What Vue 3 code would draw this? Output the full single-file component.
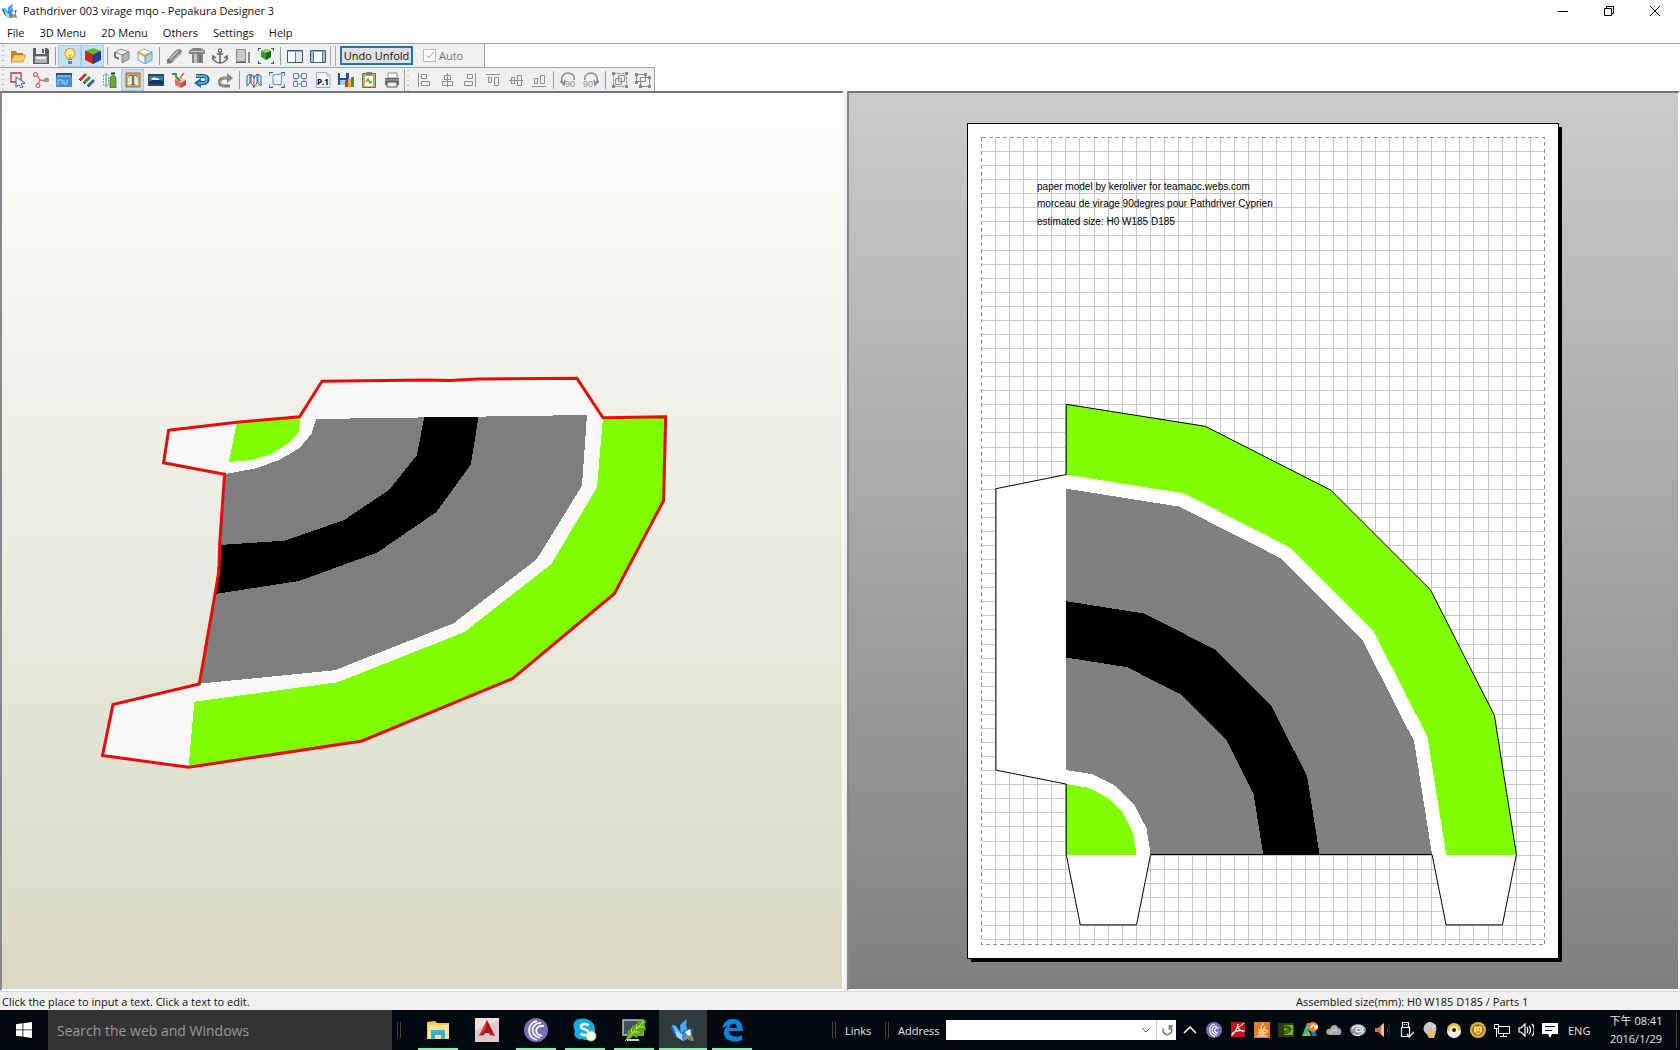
<template>
<div class="desktop">
  <header class="titlebar">
    <svg class="app-icon" viewBox="0 0 24 24" v-html="icons.app"></svg>
    <h1>Pathdriver 003 virage mqo - Pepakura Designer 3</h1>
    <div class="window-buttons">
      <button aria-label="Minimize"><svg viewBox="0 0 12 12"><path d="M1 6.500h10"/></svg></button>
      <button aria-label="Restore"><svg viewBox="0 0 12 12"><path d="M1.500 3.500h7v7h-7zM3.500 3.500v-2h7v7h-2"/></svg></button>
      <button aria-label="Close"><svg viewBox="0 0 12 12"><path d="M1 1l10 10M11 1L1 11"/></svg></button>
    </div>
  </header>

  <nav class="menubar">
    <button v-for="item in menus" :key="item">{{ item }}</button>
  </nav>

  <section class="toolbars">
    <div class="toolbar first">
      <template v-for="(group, g) in mainTools" :key="g">
        <i v-if="g" class="separator"></i>
        <button v-for="name in group" :key="name" class="tool" :class="{ active: activeTools.includes(name) }" :aria-label="name">
          <svg viewBox="0 0 16 16" v-html="icons[name]"></svg>
        </button>
      </template>
      <i class="band-grip"></i>
      <button class="unfold" @click="unfolded = !unfolded">Undo Unfold</button>
      <label class="auto"><input type="checkbox" checked disabled><span>Auto</span></label>
    </div>
    <div class="toolbar second">
      <template v-for="(group, g) in editTools" :key="g">
        <i v-if="g" class="separator"></i>
        <button v-for="name in group" :key="name" class="tool" :class="{ active: activeTools.includes(name) }" :aria-label="name">
          <svg viewBox="0 0 16 16" v-html="icons[name]"></svg>
        </button>
      </template>
      <i class="dot-grip"></i>
      <template v-for="(group, g) in alignTools" :key="g">
        <i v-if="g" class="separator"></i>
        <button v-for="name in group" :key="name" class="tool disabled" disabled :aria-label="name">
          <svg viewBox="0 0 16 16" v-html="icons[name]"></svg>
        </button>
      </template>
    </div>
  </section>

  <main class="views">
    <section class="view view-3d">
      <svg viewBox="2 93 840 896" shape-rendering="crispEdges">
        <polygon :points="model.outline" fill="#f9f9f9"/>
        <polygon :points="model.innerGrass" fill="#80ff00"/>
        <polygon :points="model.outerGrass" fill="#80ff00"/>
        <polygon :points="model.road" fill="#7e7e7e"/>
        <polygon :points="model.stripe" fill="#000"/>
        <polygon :points="model.outline" fill="none" stroke="#e60c0c" stroke-width="3" shape-rendering="auto"/>
      </svg>
    </section>
    <section class="view view-2d">
      <svg viewBox="849 93 829 896" shape-rendering="crispEdges">
        <path d="M971 127h591v835H971z" fill="#000"/>
        <path d="M967.500 123.500h591v834.500h-591z" fill="#fff" stroke="#000"/>
        <path :d="gridPath" stroke="#c6c6c6" fill="none"/>
        <path d="M981.500 137.500h563v807h-563z" fill="none" stroke="#909090" stroke-dasharray="4 3"/>
        <g class="paper-text">
          <text x="1037" y="190">paper model by keroliver for teamaoc.webs.com</text>
          <text x="1037" y="207">morceau de virage 90degres pour Pathdriver Cyprien</text>
          <text x="1037" y="225">estimated size: H0 W185 D185</text>
        </g>
        <polygon :points="sector(32)" fill="#80ff00"/>
        <polygon :points="sector(27)" fill="#fff"/>
        <polygon :points="sector(26)" fill="#808080"/>
        <polygon :points="sector(18)" fill="#000"/>
        <polygon :points="sector(14)" fill="#808080"/>
        <polygon :points="sector(6)" fill="#fff"/>
        <polygon :points="sector(5)" fill="#80ff00"/>
        <polygon v-for="tab in tabs" :key="tab" :points="tab" fill="#fdfdfd"/>
        <polyline :points="cutLine" fill="none" stroke="#000" shape-rendering="auto"/>
      </svg>
    </section>
  </main>

  <footer class="statusbar">
    <span>Click the place to input a text. Click a text to edit.</span>
    <span class="size">Assembled size(mm): H0 W185 D185 / Parts 1</span>
  </footer>

  <div class="taskbar">
    <button class="start" aria-label="Start">
      <svg viewBox="0 0 16 16"><path fill="#fff" d="M0 2.200l6.500-.9v6.200H0zM7.300 1.200L16 0v7.500H7.300zM0 8.300h6.500v6.200L0 13.700zM7.300 8.300H16V16l-8.700-1.300z"/></svg>
    </button>
    <input class="search" type="text" placeholder="Search the web and Windows" aria-label="Search the web and Windows">
    <i class="task-grip"></i>
    <div class="apps">
      <button v-for="app in apps" :key="app.icon" :class="{ running: app.running, current: app.icon === 'app' }" :aria-label="app.label">
        <svg viewBox="0 0 24 24" v-html="icons[app.icon]"></svg>
      </button>
    </div>
    <div class="deskbands">
      <i class="task-grip"></i>
      <span class="links">Links</span>
      <i class="task-grip"></i>
      <label for="address">Address</label>
      <div class="address">
        <input id="address" type="text">
        <button aria-label="Previous locations"><svg viewBox="0 0 10 10"><path d="M1 3l4 4 4-4" stroke="#555" fill="none"/></svg></button>
        <button class="go" aria-label="Refresh"><svg viewBox="0 0 12 12"><path d="M2.500 4.500a4.300 4.300 0 1 0 6-2M8.500 6V2h4" stroke="#777" stroke-width="1.600" fill="none"/></svg></button>
      </div>
    </div>
    <div class="tray">
      <button v-for="name in tray" :key="name" :aria-label="name"><svg viewBox="0 0 16 16" v-html="icons[name]"></svg></button>
    </div>
    <span class="lang">ENG</span>
    <div class="clock"><span>下午 08:41</span><span>2016/1/29</span></div>
  </div>
</div>
</template>

<script setup>
import { ref, computed } from 'vue'

const unfolded = ref(true)

const menus = ['File', '3D Menu', '2D Menu', 'Others', 'Settings', 'Help']

const mainTools = [
  ['open', 'save'],
  ['light', 'texture'],
  ['box', 'boxEdge'],
  ['roller', 'bucket', 'anchor', 'mirror', 'fit'],
  ['paneLeft', 'paneRight']
]
const editTools = [
  ['select', 'join', 'ruler', 'pencils', 'flap', 'text', 'image', 'unbox', 'undo', 'redo'],
  ['fold', 'bounds', 'arrange', 'page', 'export', 'clipboard', 'print']
]
const alignTools = [
  ['alignLeft', 'alignCenter', 'alignRight', 'alignTop', 'alignMiddle', 'alignBottom'],
  ['rotateLeft', 'rotateRight'],
  ['group', 'ungroup']
]
const activeTools = ['light', 'texture', 'text']

const apps = [
  { icon: 'explorer', label: 'File Explorer', running: true },
  { icon: 'autocad', label: 'AutoCAD', running: false },
  { icon: 'bittorrent', label: 'BitTorrent', running: true },
  { icon: 'skype', label: 'Skype', running: true },
  { icon: 'fern', label: 'Monitor', running: true },
  { icon: 'app', label: 'Pepakura Designer', running: true },
  { icon: 'edge', label: 'Edge', running: true }
]
const tray = ['chevron', 'torrentSmall', 'acrobat', 'java', 'nvidia', 'autodesk', 'cloud', 'swirl', 'speaker', 'usb', 'hand', 'disc', 'shield', 'network', 'volume', 'message']

// textured model in the 3D view
const model = {
  outline: '168.600,430.300 237,422.300 299.600,416.700 322,381.300 425.700,380 449.600,380.500 479,379 577,378.300 603,417.700 665.700,416.700 663.600,500.700 614.300,593.700 512.500,678.700 362,741 188.600,767.300 102.500,755.500 113,704.500 199.300,684 215,594.300 219,570.700 219.600,545.300 224.600,474.300 163.600,462.700',
  innerGrass: '237,422 300,417 299,431.700 287.500,444.300 271.400,454 252.500,460 229,462',
  outerGrass: '603,418 665.700,416.700 663.600,500.700 614.300,593.700 512.500,678.700 362,741 188.600,767.300 194.300,701.700 337.500,682.300 464,632.300 551.400,564 597,487.300',
  road: '316,419 587,415 582,485.700 537,559 453.600,623.300 334.600,670.300 199.300,683.700 215,594 219.600,545 225.700,474 256,468.300 279.300,460 299.600,448 311.400,434',
  stripe: '424.300,417 478.600,417 470.700,464.700 436.400,512 377,552.700 299,581 215,594 219,571 220,545 284.600,540.700 344.300,520 389,490 417,455'
}

// unfolded sheet: one unit is one grid square
const unit = 14.07
const origin = { x: 1066.2, y: 854.5 }

function at(x, y) {
  return `${(origin.x + x * unit).toFixed(1)},${(origin.y - y * unit).toFixed(1)}`
}

function arc(r) {
  return [0, 18, 36, 54, 72, 90].map(deg => {
    const a = deg * Math.PI / 180
    return at(r * Math.sin(a), r * Math.cos(a))
  })
}

function sector(r) {
  return [at(0, 0), ...arc(r)].join(' ')
}

const tabs = [
  [at(0, 27), at(-5, 26), at(-5, 6), at(0, 5)].join(' '),
  [at(0, 0), at(1, -5), at(5, -5), at(6, 0)].join(' '),
  [at(26, 0), at(27, -5), at(31, -5), at(32, 0)].join(' ')
]

const cutLine = [
  at(0, 0), at(0, 5), at(-5, 6), at(-5, 26), at(0, 27),
  ...arc(32),
  at(31, -5), at(27, -5), at(26, 0), at(6, 0), at(5, -5), at(1, -5), at(0, 0)
].join(' ')

const gridPath = computed(() => {
  let d = ''
  for (let i = 1; i < 40; i++) d += `M${Math.round(981 + i * unit) + 0.5} 138V944`
  for (let i = 1; i <= 57; i++) d += `M982 ${Math.round(137 + i * unit) + 0.5}H1544`
  return d
})

const icons = {
  app: '<path d="M1 7l4 1 4 5V7l7-6-1 6 2 5 5-2-2 10-8 3-7-4-5-8z" fill="#1a6fc4"/><path d="M9 7l7-6-1 6 1 4-6 4z" fill="#4aaaf0"/><path d="M1 7l4 1 5 8-6-3z" fill="#6cc1f7"/><path d="M4 13l7 3 1 7-6-4z" fill="#a9d8f8"/><path d="M11 16l8-5 2 7-9 5z" fill="#3c8fd4"/><path d="M14 14l5-3 1 6-3 1z" fill="#eaf5fc"/><path d="M14 22l2-4 2 4M20 22v-5l2 5z" fill="none" stroke="#b78a35" stroke-width="1.500"/>',
  open: '<path d="M1 3h5l1 2h6v3H4l-3 6z" fill="#b8862c"/><path d="M4 7h12l-3 7H1z" fill="#f6cd62" stroke="#bd8b2c" stroke-width=".7"/>',
  save: '<path d="M0 0h14l2 2v14H0z" fill="#52606e"/><path d="M3 0h9v6H3z" fill="#e9edf0"/><path d="M9 1h2v4H9z" fill="#52606e"/><path d="M2 8h12v7H2z" fill="#aab4bd"/><path d="M3 9h10v2H3z" fill="#eee"/>',
  light: '<circle cx="8" cy="5.500" r="5" fill="#fff4a4" stroke="#e9a51a" stroke-width="1.200"/><path d="M6 6l2 2 2-2M8 8v3" stroke="#e9a51a" fill="none"/><path d="M6 11h4v5H6z" fill="#6f7f9c"/><path d="M6 12.500h4" stroke="#d5dce6"/>',
  texture: '<path d="M8 0l8 3-8 4-8-4z" fill="#67b92f"/><path d="M0 3l8 4v9l-8-4z" fill="#d12622"/><path d="M16 3L8 7v9l8-4z" fill="#21409f"/><path d="M0 3l8 4 8-4M8 7v9" stroke="#333" stroke-width=".7" fill="none"/>',
  box: '<path d="M1 4l6-3 8 3-7 3z" fill="#eee" stroke="#888"/><path d="M8 7l7-3v7l-7 4z" fill="#b4b4b4" stroke="#888"/><path d="M1 4v5l4 2" fill="none" stroke="#777" stroke-width="2"/>',
  boxEdge: '<path d="M1 4l6-3 8 3-7 4z" fill="#fff" stroke="#7eb6dc"/><path d="M8 8l7-4v8l-7 4z" fill="#a9d3ef" stroke="#6ba3ca"/><path d="M1 4l7 4v8l-7-4z" fill="#e4f2fb" stroke="#6ba3ca"/><path d="M1 4l7 4 4-2" fill="none" stroke="#ed992e" stroke-width="2"/>',
  roller: '<path d="M1 12l9-10 4-1 2 2-1 3-9 9-5 1z" fill="#858585"/><path d="M4 11l8-8M7 13l7-7" stroke="#c8c8c8" stroke-width="1.300"/><path d="M1 12l4 3" stroke="#555"/>',
  bucket: '<path d="M0 3l4-3h8l4 3v3h-2v9H3V6H0z" fill="#858585"/><path d="M5 6h3v9H5z" fill="#c4c4c4"/><path d="M2 3.500h12" stroke="#d0d0d0"/><path d="M11 6v9" stroke="#666"/>',
  anchor: '<circle cx="8" cy="2.500" r="1.700" fill="none" stroke="#666" stroke-width="1.200"/><path d="M8 4v11M5 6h6M1 9c0 4 4 6 7 6s7-2 7-6M0 11l1-3 3 2M16 11l-1-3-3 2" fill="none" stroke="#666" stroke-width="1.500"/>',
  mirror: '<path d="M1.500 1.500h9v12h-9z" fill="#c8c8c8" stroke="#888"/><path d="M1 14.500h10" stroke="#555"/><path d="M13 4h2v11h-2z" fill="#888"/>',
  fit: '<path d="M8 1l5 2v6l-5 3-5-3V3z" fill="#3a9a2e"/><path d="M8 1l5 2-5 2-5-2z" fill="#8ddb50"/><path d="M8 5l5-2v6l-5 3z" fill="#1d6b22"/><path d="M0 3V0h3M13 0h3v3M0 13v3h3M16 13v3h-3" stroke="#2456a6" stroke-width="2" fill="none"/>',
  paneLeft: '<path d="M.500 2.500h15v12H.500z" fill="#fff" stroke="#315b86"/><path d="M1 3h14v1H1z" fill="#8ab0d3"/><path d="M8.500 4v10" stroke="#567a9e"/><path d="M9 4h6v10H9z" fill="#dfe9f2"/>',
  paneRight: '<path d="M.500 2.500h15v12H.500z" fill="#fff" stroke="#315b86"/><path d="M1 3h14v1H1z" fill="#8ab0d3"/><path d="M12.500 4v10M3.500 4v10" stroke="#567a9e"/><path d="M13 4h2v10h-2zM1 4h2v10H1z" fill="#a9c0d6"/>',
  select: '<path d="M11 10V1H1v9h5" fill="none" stroke="#bd3434" stroke-width="1.300"/><path d="M6 5l9 6-4 1 2 3-2 1-2-3-3 2z" fill="#eaf5ff" stroke="#385f8a"/>',
  join: '<path d="M3 2l4 6 7 1M7 8l-3 6" stroke="#e06060" fill="none" stroke-width="1.300"/><circle cx="2.500" cy="2.500" r="2" fill="#fff" stroke="#c33"/><circle cx="5" cy="13.500" r="2" fill="#fff" stroke="#c33"/><circle cx="13.500" cy="8" r="2.500" fill="#999"/>',
  ruler: '<path d="M0 1h16v14H0z" fill="#3f92d8"/><path d="M0 1h16v4H0z" fill="#1d568f"/><path d="M2 3v2M4 3v2M6 3v2M8 3v2M10 3v2M12 3v2M14 3v2" stroke="#fff"/><path d="M2 13V8h4v4M8 8v4h3V8" stroke="#b5dcf8" fill="none"/>',
  pencils: '<path d="M1 8l6-6" stroke="#c8362b" stroke-width="3"/><path d="M5 11l6-6" stroke="#3a9238" stroke-width="3"/><path d="M9 14l6-6" stroke="#2f64b4" stroke-width="3"/><path d="M0 7l2 2M4 10l2 2M8 13l2 2" stroke="#222"/>',
  flap: '<path d="M1.500 3v10h5V3z" fill="#fff" stroke="#6a9dc8" stroke-dasharray="2 1"/><path d="M4 1v14" stroke="#447baf"/><path d="M8 5l3-2 3 2v11H8z" fill="#67a83c" stroke="#426f2d" stroke-width=".7"/><path d="M9 1.500h4" stroke="#333" stroke-width="2"/>',
  text: '<path d="M1 1h14v14H1z" fill="#dba45c" stroke="#a66a24"/><path d="M3 3h10v10H3z" fill="#f7e8c7"/><text x="8" y="13" font-family="Liberation Serif, serif" font-size="14" font-weight="bold" fill="#55708c" text-anchor="middle">T</text>',
  image: '<path d="M0 2h16v12H0z" fill="#3a4552"/><path d="M1 4h14v8H1z" fill="#2d78c0"/><path d="M1 10l6-3 8 2v3H1z" fill="#1a3555"/><path d="M3 7c2-2 6-2 9 1H5z" fill="#e5f2fb"/>',
  unbox: '<path d="M4 7l5-2 6 3-5 3z" fill="#f4b6aa"/><path d="M4 7l6 4v5l-6-3z" fill="#e2705e"/><path d="M15 8l-5 3v5l5-3z" fill="#c34b3f"/><path d="M1 2l4 0v3l4 4" fill="none" stroke="#398b40" stroke-width="1.800"/><path d="M9 6l4-5" stroke="#6a9d38" stroke-width="1.500"/>',
  undo: '<path d="M2 4h7c6 0 6 7 0 7H6" fill="none" stroke="#164e8c" stroke-width="4"/><path d="M0 11l7-5v10z" fill="#1f62a8"/><path d="M2 4h7c5 0 5 7 0 7H4" fill="none" stroke="#5aaaea" stroke-width="2"/>',
  redo: '<path d="M12 6H7c-6 1-6 8 1 8h5" fill="none" stroke="#777" stroke-width="3"/><path d="M12 6H7c-5 1-5 7 0 8" fill="none" stroke="#bbb"/><path d="M16 6l-6-5v10z" fill="#888"/>',
  fold: '<path d="M1 4l3-2v9l-3 3zM15 4l-3-2v9l3 3z" fill="#dbefff" stroke="#2c638e"/><path d="M5 2l3 4 3-4v9l-3 4-3-4z" fill="#f3f9ff" stroke="#2c638e"/><path d="M8 3v13" stroke="#d52b2b"/>',
  bounds: '<path d="M4 3l9-1-1 11-8-1z" fill="#edf7ff" stroke="#5e8cba"/><path d="M0 4V.500h4M12 .500h4V4M16 12v3.500h-4M0 12v3.500h4" fill="none" stroke="#2d66a5" stroke-width="1.500"/>',
  arrange: '<path d="M1.500 1.500h5v5h-5zM9.500 1.500h5v5h-5zM1.500 9.500h4v5h-4zM9.500 9.500h5v5h-5z" fill="#e2effa" stroke="#66829e"/><path d="M6 4h4M4 6v4M12 6v4M6 12h3" stroke="#66829e"/>',
  page: '<path d="M1.500.500H12l3 3v12H1.500z" fill="#eef7ff" stroke="#85b4d8"/><path d="M12 1v3h3" fill="none" stroke="#85b4d8"/><text x="8" y="13" font-family="Open Sans, sans-serif" font-size="8" font-weight="bold" text-anchor="middle">P.1</text>',
  export: '<path d="M0 1h11v12H0z" fill="#264bb2"/><path d="M2 1h6v5H2z" fill="#fff"/><path d="M2 8h6v5H2z" fill="#a9c6f2"/><path d="M7 15v-6h3v6" fill="#d63030"/><path d="M10 15V7h3v8" fill="#f0b422"/><path d="M13 15V5h3v10" fill="#4b963a"/>',
  clipboard: '<path d="M1.500 1.500h13v14h-13z" fill="#bdac65" stroke="#7e733f"/><path d="M4 4h8v10H4z" fill="#fff"/><path d="M5 0h6v3H5z" fill="#718299"/><path d="M5 10l2-3 2 4 2-2" fill="none" stroke="#4aaa43" stroke-width="1.500"/>',
  print: '<path d="M4 1h9v5H4z" fill="#fff" stroke="#888"/><path d="M1 6h14v7H1z" fill="#656565"/><path d="M3 10h10v5H3z" fill="#e8e8e8" stroke="#555"/><path d="M1 8h14" stroke="#bbb"/>',
  alignLeft: '<path d="M2.500 1v14M5.500 2.500h5v4h-5zM5.500 9.500h8v4h-8z"/>',
  alignCenter: '<path d="M8.500 1v14M5.500 3.500h6v4h-6zM3.500 9.500h10v4h-10z"/>',
  alignRight: '<path d="M13.500 1v14M5.500 2.500h5v4h-5zM2.500 9.500h8v4h-8z"/>',
  alignTop: '<path d="M1 2.500h14M3.500 5.500h3v5h-3zM9.500 5.500h4v8h-4z"/>',
  alignMiddle: '<path d="M1 8.500h14M3.500 5.500h3v6h-3zM9.500 3.500h4v10h-4z"/>',
  alignBottom: '<path d="M1 14.500h14M3.500 6.500h3v5h-3zM9.500 3.500h4v8h-4z"/>',
  rotateLeft: '<path d="M4 12C-1 7 3 1 8 1c5 0 7 4 6 7M0 9l4 4 1-5" stroke-width="1.500"/><text x="5" y="15" font-size="9" font-family="Liberation Sans, sans-serif" stroke="none" fill="#888">90</text>',
  rotateRight: '<path d="M12 12c5-5 1-11-4-11S1 5 2 8M16 9l-4 4-1-5" stroke-width="1.500"/><text x="0" y="15" font-size="9" font-family="Liberation Sans, sans-serif" stroke="none" fill="#888">90</text>',
  group: '<path d="M1.500 1.500h13v13h-13z" stroke-dasharray="3 1"/><path d="M3.500 6.500h6v6h-6zM6.500 3.500h6v6h-6z"/><path d="M0 0h3v3H0zM13 0h3v3h-3zM0 13h3v3H0zM13 13h3v3h-3z" fill="#888" stroke="none"/>',
  ungroup: '<path d="M1.500 2.500h9v7h-9zM5.500 5.500h9v9h-9z"/><path d="M0 1h3v3H0zM9 1h3v3H9zM0 9h3v3H0zM13 4h3v3h-3zM4 13h3v3H4zM13 13h3v3h-3z" fill="#888" stroke="none"/>',
  explorer: '<path d="M1 4l8-1 2 2h12v16H1z" fill="#eec85a"/><path d="M2 7h21v14H2z" fill="#ffe394"/><path d="M5 12h14v9h-4v-4H9v4H5z" fill="#39ace0"/>',
  autocad: '<path d="M0 0h24v24H0z" fill="#efe2e2"/><path d="M0 12L24 2v22H0z" fill="#cdb1b1" opacity=".5"/><path d="M12 2l8 16-5-1-1-2h-4l-1 2-5 1z" fill="#b3171d"/><path d="M12 2l-2 10-6 6z" fill="#e13a3a"/>',
  bittorrent: '<circle cx="12" cy="12" r="12" fill="#7870b7"/><path d="M13 3C3 5 2 19 13 22M17 5C7 5 5 17 16 20M20 8c-9-1-11 8-2 10" fill="none" stroke="#fff" stroke-width="1.800"/>',
  skype: '<path d="M6 1c6-2 16 1 16 11 1 8-8 12-13 9C3 22 0 17 2 13-1 7 1 2 6 1z" fill="#11aee9"/><path d="M15.500 7.500C13 5 8 6 8 8.500c0 3 7.500 2.500 7.500 6 0 3-5.500 3.500-8 1" fill="none" stroke="#fff" stroke-width="2.600"/><circle cx="18" cy="18" r="5" fill="#fff" stroke="#a9d83a"/>',
  fern: '<path d="M1 2h20v15H1z" fill="#48515a" stroke="#bbb" stroke-width="1.500"/><path d="M5 21h12v2H5z" fill="#ccc"/><path d="M5 20l1-8 4 1 0-6 4 1 3-6 3 1 4-1-1 5 1 5-3 1 0 4-4-1-2 4-4-2-3 3z" fill="#5fa81c"/><path d="M3 23L22 3M9 10l1 5M14 6l1 5M11 14h6M16 9h6" stroke="#c9ed59" fill="none"/>',
  edge: '<path d="M2 11C4 3 8 1 13 1c8 0 10 6 10 12H9c0 6 8 7 13 4v5C10 27-2 19 7 8c-2 0-4 2-5 3zM9 10h8c0-6-7-5-8 0z" fill="#0b83db"/>',
  chevron: '<path d="M2 11l6-6 6 6" fill="none" stroke="#fff" stroke-width="1.500"/>',
  torrentSmall: '<circle cx="8" cy="8" r="8" fill="#796fac"/><path d="M9 2C2 3 2 13 9 14.500M11 4c-6 0-7 7 0 9M13 6c-5-1-6 4-1 5" fill="none" stroke="#fff" stroke-width="1.200"/>',
  acrobat: '<path d="M1 0h14v15H1z" fill="#c41119"/><path d="M8 2c0 5-5 10-6 11 0-3 8-6 12-4-3 1-7-3-6-7" fill="none" stroke="#fff" stroke-width="1.200"/><path d="M9 5l5-4" stroke="#fff"/>',
  java: '<path d="M0 0h16v16H0z" fill="#e77b22"/><path d="M9 1c1 2-4 3-1 6M11 4c1 1-2 2-1 4M4 8h8c2 0 1 3-1 3M5 10h5v2H5zM3 14h10" stroke="#fff" fill="none"/>',
  nvidia: '<path d="M0 1h16v14H0z" fill="#26391b"/><path d="M6 3h9v10H6z" fill="#76b900"/><path d="M1 8c3-5 9-5 12-1-2 5-9 6-12 1zM4 8c2-3 5-3 7-1-2 3-5 3-7 1z" fill="none" stroke="#294a10" stroke-width="1.300"/>',
  autodesk: '<path d="M5 1h5L4 14H0z" fill="#39b3a2"/><path d="M7 1l4 3 4 10h-5z" fill="#2d70bf"/><path d="M0 14l7-5 2 5z" fill="#8bc53f"/><circle cx="11" cy="5" r="5" fill="#f08126"/><path d="M9 6c0-4 5-3 5 0M12 6h3V3" stroke="#fff" fill="none" stroke-width="1.500"/>',
  cloud: '<path d="M1 12c-2-4 1-6 3-5 2-6 8-4 8-1 4 0 4 5 2 7H3z" fill="#aaa"/><path d="M5 12c0-4 4-5 6-3" stroke="#ddd" fill="none"/>',
  swirl: '<ellipse cx="8" cy="8" rx="8" ry="6" fill="#89969e"/><path d="M2 7c3-5 11-3 11 0s-7 4-7 1 5-2 5 0M3 12c5 3 9 0 11-3" stroke="#eef4f5" fill="none" stroke-width="1.300"/>',
  speaker: '<path d="M1 6h3l6-5v14l-6-5H1z" fill="#d36a4e"/><path d="M7 4l3-3v14l-3-3z" fill="#f1c2aa"/><path d="M12 4c2 2 2 6 0 8M14 2c3 3 3 9 0 12" stroke="#61352d" fill="none"/>',
  usb: '<path d="M4.500 5V.500h6V5M3.500 5.500h8v9h-8zM6.500 2v1M8.500 2v1" fill="none" stroke="#eee" stroke-width="1.200"/><path d="M9 12l2 3 5-5" stroke="#ddd" fill="none" stroke-width="1.500"/>',
  hand: '<circle cx="8" cy="6.500" r="6.500" fill="#c4c8cb"/><path d="M8 0v7l6-4" stroke="#eee" fill="none"/><path d="M3 9l4 2V6c0-2 3-2 3 0v3l4 1-2 6H7z" fill="#f0b67a"/>',
  disc: '<circle cx="8" cy="8" r="7" fill="#e6c63c"/><path d="M1 9a7 7 0 0 0 14 0z" fill="#eee"/><circle cx="8" cy="8" r="4" fill="#f7f3da"/><circle cx="8" cy="8" r="2" fill="#222"/>',
  shield: '<circle cx="8" cy="8" r="8" fill="#e2b546"/><circle cx="8" cy="8" r="6" fill="#ad701b"/><path d="M4 5l2-1 2 1 2-1 2 1v5l-4 3-4-3z" fill="#ffdc69"/><path d="M6 7h1M9 7h1M6 10h4" stroke="#774d16"/>',
  network: '<path d="M4.500 4.500h11v7h-11zM9.500 12v3M6 14.500h7M.500 2.500h4v4h-4zM2.500 7v8" fill="none" stroke="#fff"/>',
  volume: '<path d="M1 6h2l4-4v12l-4-4H1zM9 5c1 2 1 4 0 6M11 4c2 2 2 6 0 8M14 2c3 3 3 9 0 12" fill="none" stroke="#fff" stroke-width="1.200"/>',
  message: '<path d="M0 1h16v11H10l-2 4-2-4H0z" fill="#fff"/><path d="M3 4.500h10M3 8.500h7" stroke="#111"/>'
}
</script>

<style>
body {
  margin: 0;
  overflow: hidden;
}
</style>

<style scoped>
.desktop {
  display: flex;
  flex-direction: column;
  height: 100vh;
  background: #fff;
  color: #111;
  font-family: "Open Sans", "Noto Sans CJK TC", sans-serif;
  font-size: 11px;
}

button,
input {
  font: inherit;
  color: inherit;
  margin: 0;
  padding: 0;
  border: 0;
  background: none;
  box-sizing: border-box;
}

button {
  display: flex;
  align-items: center;
  justify-content: center;
}

svg {
  display: block;
}

/* window chrome */
.titlebar {
  display: flex;
  align-items: center;
  height: 22px;
  padding-left: 2px;
}

.titlebar h1 {
  margin: 0 0 0 5px;
  font-size: 11px;
  font-weight: 400;
  line-height: 22px;
}

.app-icon {
  width: 16px;
  height: 16px;
}

.window-buttons {
  display: flex;
  margin: 0 2px 0 auto;
}

.window-buttons button {
  width: 46px;
  height: 20px;
}

.window-buttons svg {
  width: 12px;
  height: 12px;
  fill: none;
  stroke: #000;
}

.menubar {
  display: flex;
  gap: 15px;
  height: 21px;
  padding-left: 7px;
}

/* toolbars */
.toolbars {
  display: flex;
  flex-direction: column;
  align-items: flex-start;
  border-top: 1px solid #a0a0a0;
}

.toolbar {
  display: flex;
  align-items: center;
  height: 23px;
  padding-left: 6px;
  background: radial-gradient(circle, #bbb 1px, transparent 1px) 1px 4px / 4px 5px repeat-y #f0f0f0;
  border-right: 1px solid #a0a0a0;
}

.toolbar.second {
  border-top: 1px solid #a0a0a0;
}

.tool {
  width: 23px;
  height: 22px;
}

.tool svg {
  width: 16px;
  height: 16px;
}

.tool.active {
  background: #c5e0f5;
  box-shadow: inset 0 0 0 1px #a3cdec;
}

.tool.disabled svg {
  fill: none;
  stroke: #8c8c8c;
}

.separator {
  width: 1px;
  height: 18px;
  margin: 0 2px 0 3px;
  background: #999;
}

.band-grip {
  width: 4px;
  height: 20px;
  margin: 0 4px 0 1px;
  border: solid #aaa;
  border-width: 0 1px;
}

.dot-grip {
  width: 7px;
  height: 22px;
  margin-left: 1px;
  border-left: 1px solid #a0a0a0;
  background: radial-gradient(circle, #bbb 1px, transparent 1px) 1px 4px / 4px 5px repeat-y;
}

.unfold {
  width: 73px;
  height: 19px;
  border: 2px solid #1875c4;
  background: #e1e1e1;
  white-space: nowrap;
}

.auto {
  display: flex;
  align-items: center;
  gap: 3px;
  width: 61px;
  margin-left: 10px;
  color: #777;
}

.auto input {
  appearance: none;
  width: 13px;
  height: 13px;
  border: 1px solid #bbb;
  background: #fff;
  position: relative;
}

.auto input:checked::after {
  content: "";
  position: absolute;
  left: 4px;
  top: 0;
  width: 3px;
  height: 7px;
  border: solid #aaa;
  border-width: 0 1px 1px 0;
  transform: rotate(40deg);
}

/* model and sheet */
.views {
  display: flex;
  flex: 1;
  gap: 3px;
  min-height: 0;
  background: #f0f0f0;
}

.view {
  box-sizing: border-box;
  min-width: 0;
  border: 2px solid #fff;
  border-top-color: #777;
  border-left-color: #888;
}

.view svg {
  width: 100%;
  height: 100%;
}

.view-3d {
  flex: 844 1 0;
  background: linear-gradient(#fdfdfd, #d9d9c5);
}

.view-2d {
  flex: 833 1 0;
  background: linear-gradient(#cbcbcb, #808080);
}

.paper-text {
  font-family: "Liberation Sans", Arial, sans-serif;
  font-size: 10px;
}

.statusbar {
  display: flex;
  justify-content: space-between;
  height: 18px;
  padding-left: 2px;
  border-top: 1px solid #d7d7d7;
  background: #f0f0f0;
  line-height: 20px;
}

.statusbar .size {
  width: 384px;
}

/* taskbar */
.taskbar {
  display: flex;
  align-items: center;
  height: 40px;
  background: #000a0e;
  color: #e6e6e6;
}

.start {
  width: 48px;
  height: 40px;
}

.start svg {
  width: 16px;
  height: 16px;
}

.search {
  width: 344px;
  height: 40px;
  padding: 0 9px;
  background: #333;
  font-size: 14px;
}

.search::placeholder {
  color: #999;
  opacity: 1;
}

.task-grip {
  flex: none;
  width: 4px;
  height: 16px;
  box-sizing: border-box;
  border: solid #3d4548;
  border-width: 0 1px;
}

.search + .task-grip {
  margin: 0 13px 0 5px;
}

.apps {
  display: flex;
  gap: 1px;
}

.apps button {
  position: relative;
  width: 48px;
  height: 40px;
}

.apps svg {
  width: 24px;
  height: 24px;
}

.apps .running::after {
  content: "";
  position: absolute;
  left: 4px;
  right: 4px;
  bottom: 0;
  height: 2px;
  background: #80efac;
}

.apps .current {
  background: #31393c;
}

.apps .current::after {
  left: 0;
  right: 0;
}

.deskbands {
  display: flex;
  align-items: center;
  margin-left: auto;
}

.links {
  width: 27px;
  margin: 0 13px 0 9px;
}

.deskbands label {
  width: 42px;
  margin: 0 6px 0 9px;
}

.address {
  display: flex;
  width: 230px;
  height: 20px;
  background: #fff;
}

.address input {
  flex: 1;
  min-width: 0;
  color: #111;
}

.address button {
  width: 20px;
}

.address .go {
  border-left: 1px solid #ccc;
}

.address svg {
  width: 10px;
  height: 10px;
}

.address .go svg {
  width: 12px;
  height: 12px;
}

.tray {
  display: flex;
  margin-left: 2px;
}

.tray button {
  width: 24px;
  height: 40px;
}

.tray svg {
  width: 16px;
  height: 16px;
}

.lang {
  width: 28px;
  margin-left: 6px;
}

.clock {
  display: flex;
  flex-direction: column;
  align-items: center;
  width: 80px;
  margin-right: 3px;
  border-right: 1px solid #444;
  line-height: 18px;
}
</style>
